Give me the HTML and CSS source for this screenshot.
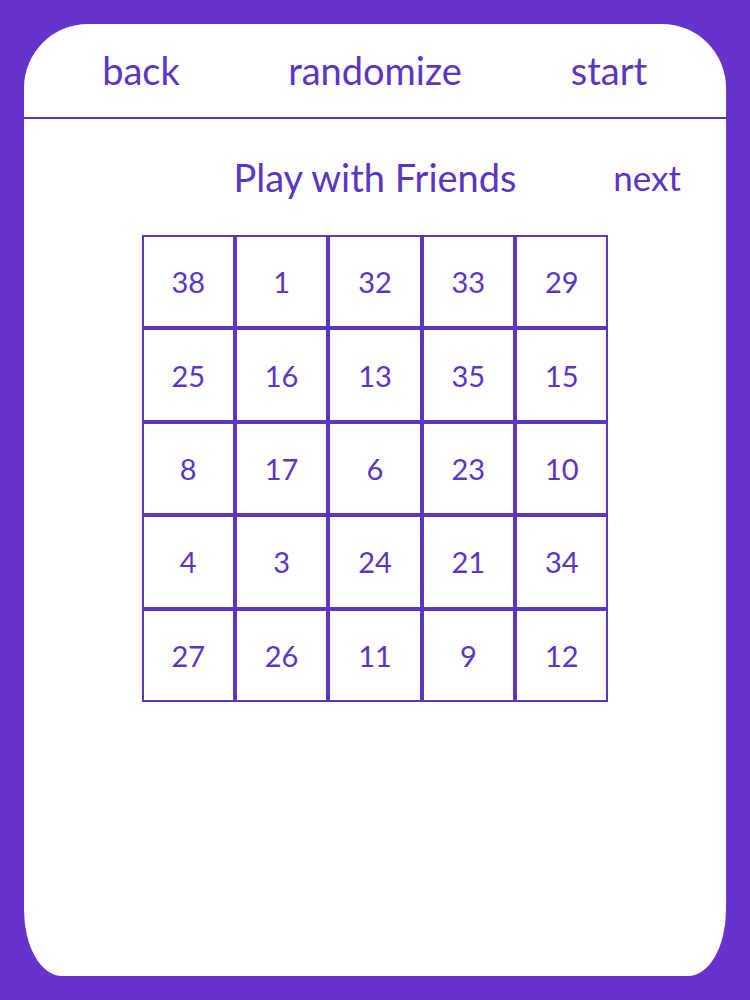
FILE: index.html
```html
<!DOCTYPE html>
<html>
<head>
<meta charset="utf-8">
<link rel="stylesheet" href="styles.css">
</head>
<body>
<div class="card">
  <div class="topbar">
    <span class="nav">back</span>
    <span class="nav">randomize</span>
    <span class="nav">start</span>
  </div>
  <div class="titlerow">
    <span></span>
    <span class="title">Play with Friends</span>
    <span class="next">next</span>
  </div>
  <div class="board">
    <div class="cell">38</div><div class="cell">1</div><div class="cell">32</div><div class="cell">33</div><div class="cell">29</div>
    <div class="cell">25</div><div class="cell">16</div><div class="cell">13</div><div class="cell">35</div><div class="cell">15</div>
    <div class="cell">8</div><div class="cell">17</div><div class="cell">6</div><div class="cell">23</div><div class="cell">10</div>
    <div class="cell">4</div><div class="cell">3</div><div class="cell">24</div><div class="cell">21</div><div class="cell">34</div>
    <div class="cell">27</div><div class="cell">26</div><div class="cell">11</div><div class="cell">9</div><div class="cell">12</div>
  </div>
</div>
</body>
</html>
```
FILE: styles.css
```css
html, body {
  margin: 0;
  padding: 0;
  background: #6734cb;
}
body {
  padding: 24px;
  font-family: "Lato", "Open Sans", sans-serif;
  color: #5b35c4;
}
.card {
  width: 702px;
  height: 952px;
  background: #ffffff;
  border-radius: 64px 64px 38px 38px / 64px 64px 66px 66px;
  overflow: hidden;
}
.topbar {
  display: grid;
  grid-template-columns: 1fr 1fr 1fr;
  border-bottom: 2px solid #5b35c4;
  box-sizing: border-box;
  height: 95px;
  padding-top: 24px;
}
.nav {
  text-align: center;
  font-size: 38px;
  line-height: 44px;
}
.titlerow {
  display: grid;
  grid-template-columns: 1fr auto 1fr;
  padding-top: 36px;
  height: 116px;
  box-sizing: border-box;
}
.title {
  font-size: 38px;
  line-height: 44px;
}
.next {
  justify-self: end;
  padding-right: 45px;
  font-size: 35px;
  line-height: 44px;
}
.board {
  display: grid;
  grid-template-columns: repeat(5, 93.4px);
  grid-template-rows: repeat(5, 93.4px);
  width: 467px;
  margin: 0 auto;
}
.cell {
  border: 2px solid #5b35c4;
  display: flex;
  align-items: center;
  justify-content: center;
  font-size: 29px;
}
```
